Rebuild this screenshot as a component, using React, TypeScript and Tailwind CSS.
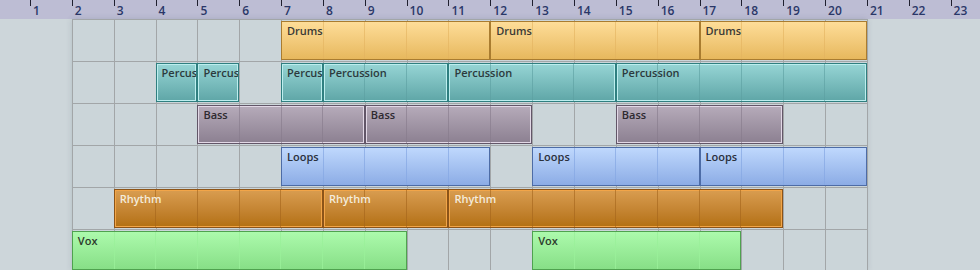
const bars = Array.from({ length: 23 }, (_, i) => i + 1);
const gridBars = Array.from({ length: 19 }, (_, i) => i + 2);

const styles = {
  drums: {
    box: 'border-[#a97c30] bg-linear-to-b from-[#fedd98] to-[#e7b85d] text-[#3a3936]',
    line: 'border-[#e2b25f]/60',
  },
  perc: {
    box: 'border-[#2f7f80] bg-linear-to-b from-[#96d5d5] to-[#5fa6a7] text-[#2c3a3d] shadow-[inset_0_0_0_1px_#bdeeee]',
    line: 'border-[#5c9fa0]/60',
  },
  bass: {
    box: 'border-[#625668] bg-linear-to-b from-[#b6abba] to-[#8c8091] text-[#2e2a30] shadow-[inset_0_0_0_1px_#e2d8e6]',
    line: 'border-[#85798a]/60',
  },
  loops: {
    box: 'border-[#4d6ca6] bg-linear-to-b from-[#bfd8fd] to-[#8cace5] text-[#2a303c]',
    line: 'border-[#85a6e2]/70',
  },
  rhythm: {
    box: 'border-[#8c5418] bg-linear-to-b from-[#d99d50] to-[#b3700f] text-[#f4ecdc] shadow-[inset_0_0_0_1px_#f2a548]',
    line: 'border-[#a4641a]/60',
  },
  vox: {
    box: 'border-[#4fa24f] bg-linear-to-b from-[#acfaac] to-[#87df87] text-[#2c3a2c]',
    line: 'border-[#9af09a]/80',
  },
};

const tracks = [
  { name: 'Drums', style: styles.drums, clips: [[7, 12], [12, 17], [17, 21]] },
  { name: 'Percussion', style: styles.perc, clips: [[4, 5], [5, 6], [7, 8], [8, 11], [11, 15], [15, 21]] },
  { name: 'Bass', style: styles.bass, clips: [[5, 9], [9, 13], [15, 19]] },
  { name: 'Loops', style: styles.loops, clips: [[7, 12], [13, 17], [17, 21]] },
  { name: 'Rhythm', style: styles.rhythm, clips: [[3, 8], [8, 11], [11, 19]] },
  { name: 'Vox', style: styles.vox, clips: [[2, 10], [13, 18]] },
];

function Clip({ name, from, to, row, style }: { name: string; from: number; to: number; row: number; style: { box: string; line: string } }) {
  const cells = Array.from({ length: to - from }, (_, i) => i);
  return (
    <div
      className={`relative mt-[2px] h-[39px] overflow-hidden border ${style.box}`}
      style={{ gridColumn: `${from + 1} / ${to + 1}`, gridRow: `${row}` }}
    >
      <div className="absolute inset-0 flex">
        {cells.map((i) => (
          <div key={i} className={`flex-1 ${i > 0 ? `border-l ${style.line}` : ''}`} />
        ))}
      </div>
      <div className="relative whitespace-nowrap pl-[5px] pt-px text-[11px] leading-[15px] font-semibold">{name}</div>
    </div>
  );
}

export default function App() {
  return (
    <div className="h-[270px] w-[980px] overflow-hidden bg-[#cdd6da] font-['Open_Sans',sans-serif]">
      <div className="grid grid-cols-[30px_repeat(23,41.85px)] grid-rows-[19px_repeat(6,42px)]">
        <div className="bg-[#bdbdd4]" style={{ gridColumn: '1 / 25', gridRow: '1' }} />
        {bars.map((n) => (
          <div key={n} className="flex items-start" style={{ gridColumn: `${n + 1}`, gridRow: '1' }}>
            <div className="h-[6px] w-px bg-[#1f1f2e]" />
            <span className="ml-[2px] mt-[3px] text-[12px] leading-[16px] font-semibold text-[#2a3768]">{n}</span>
          </div>
        ))}

        <div
          className="bg-[#cbd5d9] shadow-[0_0_6px_rgba(60,80,90,0.18)]"
          style={{ gridColumn: '3 / 22', gridRow: '2 / 8' }}
        />

        {tracks.map((track, r) => (
          <div key={track.name} className="contents">
            {gridBars.map((b) => (
              <div
                key={b}
                className="border-l border-t border-[#a2a6a8]"
                style={{ gridColumn: `${b + 1}`, gridRow: `${r + 2}` }}
              />
            ))}
            <div className="w-px bg-[#a2a6a8]" style={{ gridColumn: '22', gridRow: `${r + 2}` }} />
            {track.clips.map(([from, to]) => (
              <Clip key={from} name={track.name} from={from} to={to} row={r + 2} style={track.style} />
            ))}
          </div>
        ))}
      </div>
    </div>
  );
}
